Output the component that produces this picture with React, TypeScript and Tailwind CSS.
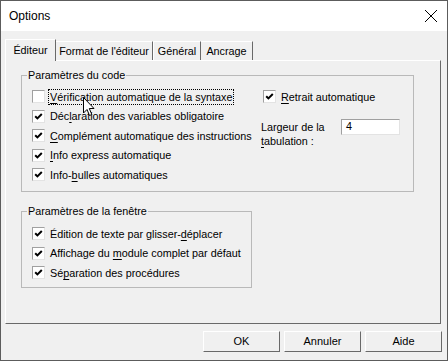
import React from 'react';

const font = { fontFamily: '"Liberation Sans", Arial, sans-serif' };

function Check({ checked }: { checked: boolean }) {
  return (
    <span className="w-[13px] h-[13px] shrink-0 bg-white border border-t-[#a0a0a0] border-l-[#a0a0a0] border-r-[#e3e3e3] border-b-[#e3e3e3] flex items-center justify-center">
      {checked && (
        <svg width="9" height="9" viewBox="0 0 9 9">
          <path d="M1.2 4.2 L3.4 6.4 L7.8 2" fill="none" stroke="#000" strokeWidth="2" />
        </svg>
      )}
    </span>
  );
}

function U({ children }: { children: React.ReactNode }) {
  return <span className="underline underline-offset-[2px]">{children}</span>;
}

function Row({ checked, children, focus }: { checked: boolean; children: React.ReactNode; focus?: boolean }) {
  return (
    <div className="flex items-center h-[19.5px]">
      <Check checked={checked} />
      <span className={'ml-[4px] px-[1px] leading-[14px] ' + (focus ? 'outline outline-1 outline-dotted outline-black' : '')}>
        {children}
      </span>
    </div>
  );
}

function Group({ title, className, children }: { title: string; className: string; children: React.ReactNode }) {
  return (
    <div className={'relative border border-[#b9b9b9] ' + className}>
      <span className="absolute -top-[8px] left-[5px] bg-[#f0f0f0] px-[1px] leading-[14px]">{title}</span>
      {children}
    </div>
  );
}

function Btn({ label }: { label: string }) {
  return (
    <button className="w-[77px] h-[21px] bg-[#f0f0f0] border border-t-white border-l-white border-r-[#696969] border-b-[#696969] text-[11px] text-black leading-none">
      {label}
    </button>
  );
}

export default function App() {
  return (
    <div style={font} className="w-[448px] h-[361px] border border-[#5c5c5c] bg-[#f0f0f0] flex flex-col text-[10.8px] text-black relative overflow-hidden">
      {/* Title bar */}
      <div className="h-[30px] bg-white flex items-center justify-between pl-[8px] pr-[8px] shrink-0">
        <span className="text-[12px]">Options</span>
        <svg width="14" height="14" viewBox="0 0 14 14" className="mr-[1px]">
          <path d="M1 1 L13 13 M13 1 L1 13" stroke="#000" strokeWidth="1" />
        </svg>
      </div>

      {/* Tabs */}
      <div className="flex items-end h-[29px] pl-[4px] shrink-0">
        <div className="w-[51px] h-[22px] relative z-10 -mb-px bg-[#f0f0f0] border-l border-t border-r border-l-white border-t-white border-r-[#696969] flex items-center justify-center">
          Éditeur
        </div>
        <div className="w-[97px] h-[19px] border-t border-r border-t-white border-r-[#696969] flex items-center justify-center">
          Format de l'éditeur
        </div>
        <div className="w-[48px] h-[19px] border-t border-r border-l border-l-white border-t-white border-r-[#696969] flex items-center justify-center">
          Général
        </div>
        <div className="w-[52px] h-[19px] border-t border-r border-t-white border-r-[#696969] flex items-center justify-center">
          Ancrage
        </div>
      </div>

      {/* Panel */}
      <div className="ml-[4px] w-[436px] h-[264px] border border-t-white border-l-white border-r-[#696969] border-b-[#696969] pt-[14px] pl-[15px] flex flex-col shrink-0">
        <Group title="Paramètres du code" className="w-[393px] h-[117px] flex pt-[11px] pl-[10px]">
          <div className="w-[231px] flex flex-col">
            <Row checked={false} focus>
              <U>V</U>érification automatique de la syntaxe
            </Row>
            <Row checked>
              Déc<U>l</U>aration des variables obligatoire
            </Row>
            <Row checked>
              <U>C</U>omplément automatique des instructions
            </Row>
            <Row checked>
              <U>I</U>nfo express automatique
            </Row>
            <Row checked>
              Info-<U>b</U>ulles automatiques
            </Row>
          </div>
          <div className="flex flex-col">
            <Row checked>
              <U>R</U>etrait automatique
            </Row>
            <div className="flex items-start mt-[12px] -ml-[2px]">
              <div className="w-[80px] leading-[14px] mt-[1px]">
                Largeur de la
                <br />
                <U>t</U>abulation :
              </div>
              <div className="w-[59px] h-[16px] bg-white border border-t-[#a0a0a0] border-l-[#a0a0a0] border-r-[#e3e3e3] border-b-[#e3e3e3] flex items-center pl-[4px]">
                4
              </div>
            </div>
          </div>
        </Group>

        <Group title="Paramètres de la fenêtre" className="mt-[19px] w-[231px] h-[77px] flex flex-col pt-[12px] pl-[10px]">
          <Row checked>
            Édition de texte par glisser-<U>d</U>éplacer
          </Row>
          <Row checked>
            Affichage du <U>m</U>odule complet par défaut
          </Row>
          <Row checked>
            Sé<U>p</U>aration des procédures
          </Row>
        </Group>
      </div>

      {/* Buttons */}
      <div className="flex justify-end gap-[4px] pr-[5px] pt-[7px]">
        <Btn label="OK" />
        <Btn label="Annuler" />
        <Btn label="Aide" />
      </div>

      {/* Mouse cursor */}
      <svg width="13" height="20" viewBox="0 0 13 20" className="absolute left-[82px] top-[96px]">
        <path d="M0.5 0.5 L0.5 16 L4 12.5 L6.5 18.5 L8.8 17.5 L6.3 11.5 L11 11.5 Z" fill="#fff" stroke="#000" strokeWidth="1" />
      </svg>
    </div>
  );
}
